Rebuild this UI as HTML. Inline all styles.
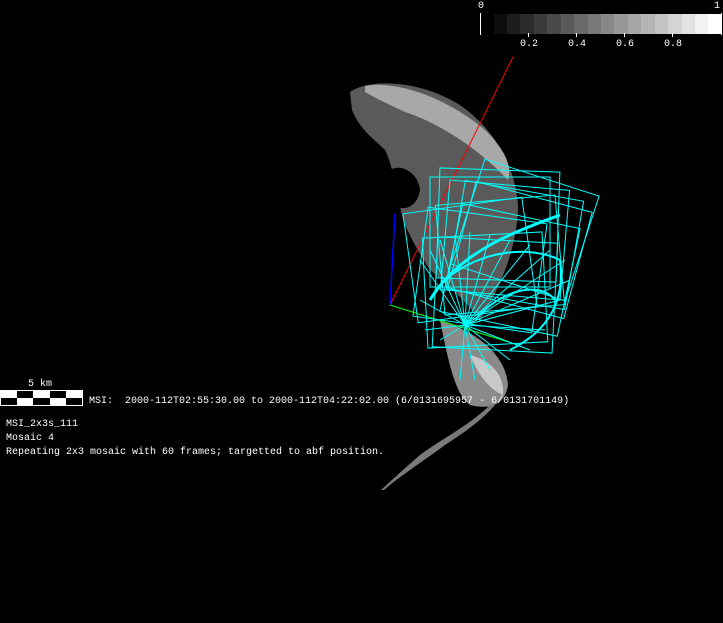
<!DOCTYPE html><html><head><style>
html,body{margin:0;background:#000;width:723px;height:623px;overflow:hidden}
.t{position:absolute;font-family:"Liberation Mono",monospace;font-size:10px;color:#fff;white-space:pre;line-height:12px}
</style></head><body>
<svg width="723" height="623" style="position:absolute;left:0;top:0">
<g>
<rect x="494" y="14" width="14" height="20" fill="#0d0d0d"/><rect x="507" y="14" width="14" height="20" fill="#1c1c1c"/><rect x="520" y="14" width="14" height="20" fill="#2b2b2b"/><rect x="534" y="14" width="14" height="20" fill="#3a3a3a"/><rect x="547" y="14" width="14" height="20" fill="#4a4a4a"/><rect x="561" y="14" width="14" height="20" fill="#595959"/><rect x="574" y="14" width="14" height="20" fill="#696969"/><rect x="588" y="14" width="14" height="20" fill="#787878"/><rect x="601" y="14" width="14" height="20" fill="#878787"/><rect x="614" y="14" width="14" height="20" fill="#979797"/><rect x="628" y="14" width="14" height="20" fill="#a6a6a6"/><rect x="641" y="14" width="14" height="20" fill="#b5b5b5"/><rect x="655" y="14" width="14" height="20" fill="#c4c4c4"/><rect x="668" y="14" width="14" height="20" fill="#d4d4d4"/><rect x="682" y="14" width="14" height="20" fill="#e3e3e3"/><rect x="695" y="14" width="14" height="20" fill="#f2f2f2"/><rect x="708" y="14" width="14" height="20" fill="#fff"/>
<line x1="480.5" y1="13" x2="480.5" y2="35" stroke="#fff"/><line x1="721.5" y1="13" x2="721.5" y2="35" stroke="#fff"/>
<line x1="528.5" y1="33" x2="528.5" y2="37" stroke="#fff"/><line x1="576.5" y1="33" x2="576.5" y2="37" stroke="#fff"/><line x1="624.5" y1="33" x2="624.5" y2="37" stroke="#fff"/><line x1="672.5" y1="33" x2="672.5" y2="37" stroke="#fff"/>
</g>
<path d="M350,92 C370,78 420,80 460,105 C495,130 515,165 518,205 C518,240 505,280 480,320 C465,300 448,285 430,270 C420,255 412,240 405,225 C398,205 395,170 385,150 C375,140 360,130 352,110 Z" fill="#5a5a5a"/>
<path d="M365,86 C400,80 450,100 485,130 C505,150 512,165 508,180 C485,155 445,125 405,112 C390,105 375,98 365,92 Z" fill="#a8a8a8"/>
<path d="M385,175 C395,160 418,170 420,190 C416,212 398,212 388,200 Z" fill="#000"/>
<path d="M440,320 C470,330 505,350 508,385 C505,405 490,410 470,405 C455,395 448,360 440,320 Z" fill="#8a8a8a"/>
<path d="M470,355 C490,360 505,375 503,395 C490,390 478,375 470,355Z" fill="#c8c8c8"/>
<path d="M490,405 C470,425 440,440 420,455 C405,468 392,480 381,490 L384,490 C400,476 425,460 445,445 C465,432 482,420 495,405Z" fill="#7a7a7a"/>
<line x1="390" y1="305" x2="513" y2="57" stroke="#f00"/>
<line x1="390" y1="305" x2="395" y2="214" stroke="#00f" stroke-width="1.5"/>
<line x1="390" y1="305" x2="518" y2="345" stroke="#0f0"/>
<defs><rect id="f" x="-60" y="-55" width="120" height="110" fill="none" stroke="#0ff"/></defs>
<g>
<use href="#f" transform="translate(490,232) rotate(0)"/>
<use href="#f" transform="translate(505,240) rotate(5)"/>
<use href="#f" transform="translate(515,245) rotate(10)"/>
<use href="#f" transform="translate(520,250) rotate(15)"/>
<use href="#f" transform="translate(500,255) rotate(-5)"/>
<use href="#f" transform="translate(485,290) rotate(-3)"/>
<use href="#f" transform="translate(495,295) rotate(3)"/>
<use href="#f" transform="translate(480,270) rotate(8)"/>
<use href="#f" transform="translate(510,270) rotate(12)"/>
<use href="#f" transform="translate(525,230) rotate(18)"/>
<use href="#f" transform="translate(470,260) rotate(-8)"/>
<use href="#f" transform="translate(498,225) rotate(2)"/>
</g>
<g stroke="#0ff" stroke-width="1">
<path d="M465,325 L420,260 M465,325 L430,250 M465,325 L440,240 M465,325 L455,235 M465,325 L470,232 M465,325 L490,235 M465,325 L510,240 M465,325 L530,245 M465,325 L550,250 M465,325 L565,260 M465,325 L570,280 M465,325 L560,300 M465,325 L545,330 M465,325 L530,350 M465,325 L510,360 M465,325 L490,370 M465,325 L475,380 M465,325 L460,380 M465,325 L440,340 M465,325 L425,330 M465,325 L420,300" />
<path d="M430,300 C460,250 520,230 560,215" fill="none" stroke-width="3"/>
<path d="M445,280 C480,250 530,245 560,260 C565,300 550,330 510,350" fill="none" stroke-width="2"/>
<path d="M475,320 C500,290 540,280 555,300" fill="none" stroke-width="2"/>
</g>
<rect x="0.5" y="390.5" width="82" height="15" fill="#fff" stroke="#fff"/>
<rect x="17" y="391" width="16" height="7" fill="#000"/><rect x="50" y="391" width="16" height="7" fill="#000"/>
<rect x="1" y="398" width="16" height="7" fill="#000"/><rect x="33" y="398" width="17" height="7" fill="#000"/><rect x="66" y="398" width="16" height="7" fill="#000"/>
</svg>
<div class="t" style="left:478px;top:1px">0</div>
<div class="t" style="left:714px;top:1px">1</div>
<div class="t" style="left:520px;top:39px">0.2</div>
<div class="t" style="left:568px;top:39px">0.4</div>
<div class="t" style="left:616px;top:39px">0.6</div>
<div class="t" style="left:664px;top:39px">0.8</div>
<div class="t" style="left:28px;top:379px">5 km</div>
<div class="t" style="left:89px;top:396px">MSI:  2000-112T02:55:30.00 to 2000-112T04:22:02.00 (6/0131695957 - 6/0131701149)</div>
<div class="t" style="left:6px;top:419px">MSI_2x3s_111</div>
<div class="t" style="left:6px;top:433px">Mosaic 4</div>
<div class="t" style="left:6px;top:447px">Repeating 2x3 mosaic with 60 frames; targetted to abf position.</div>
</body></html>
